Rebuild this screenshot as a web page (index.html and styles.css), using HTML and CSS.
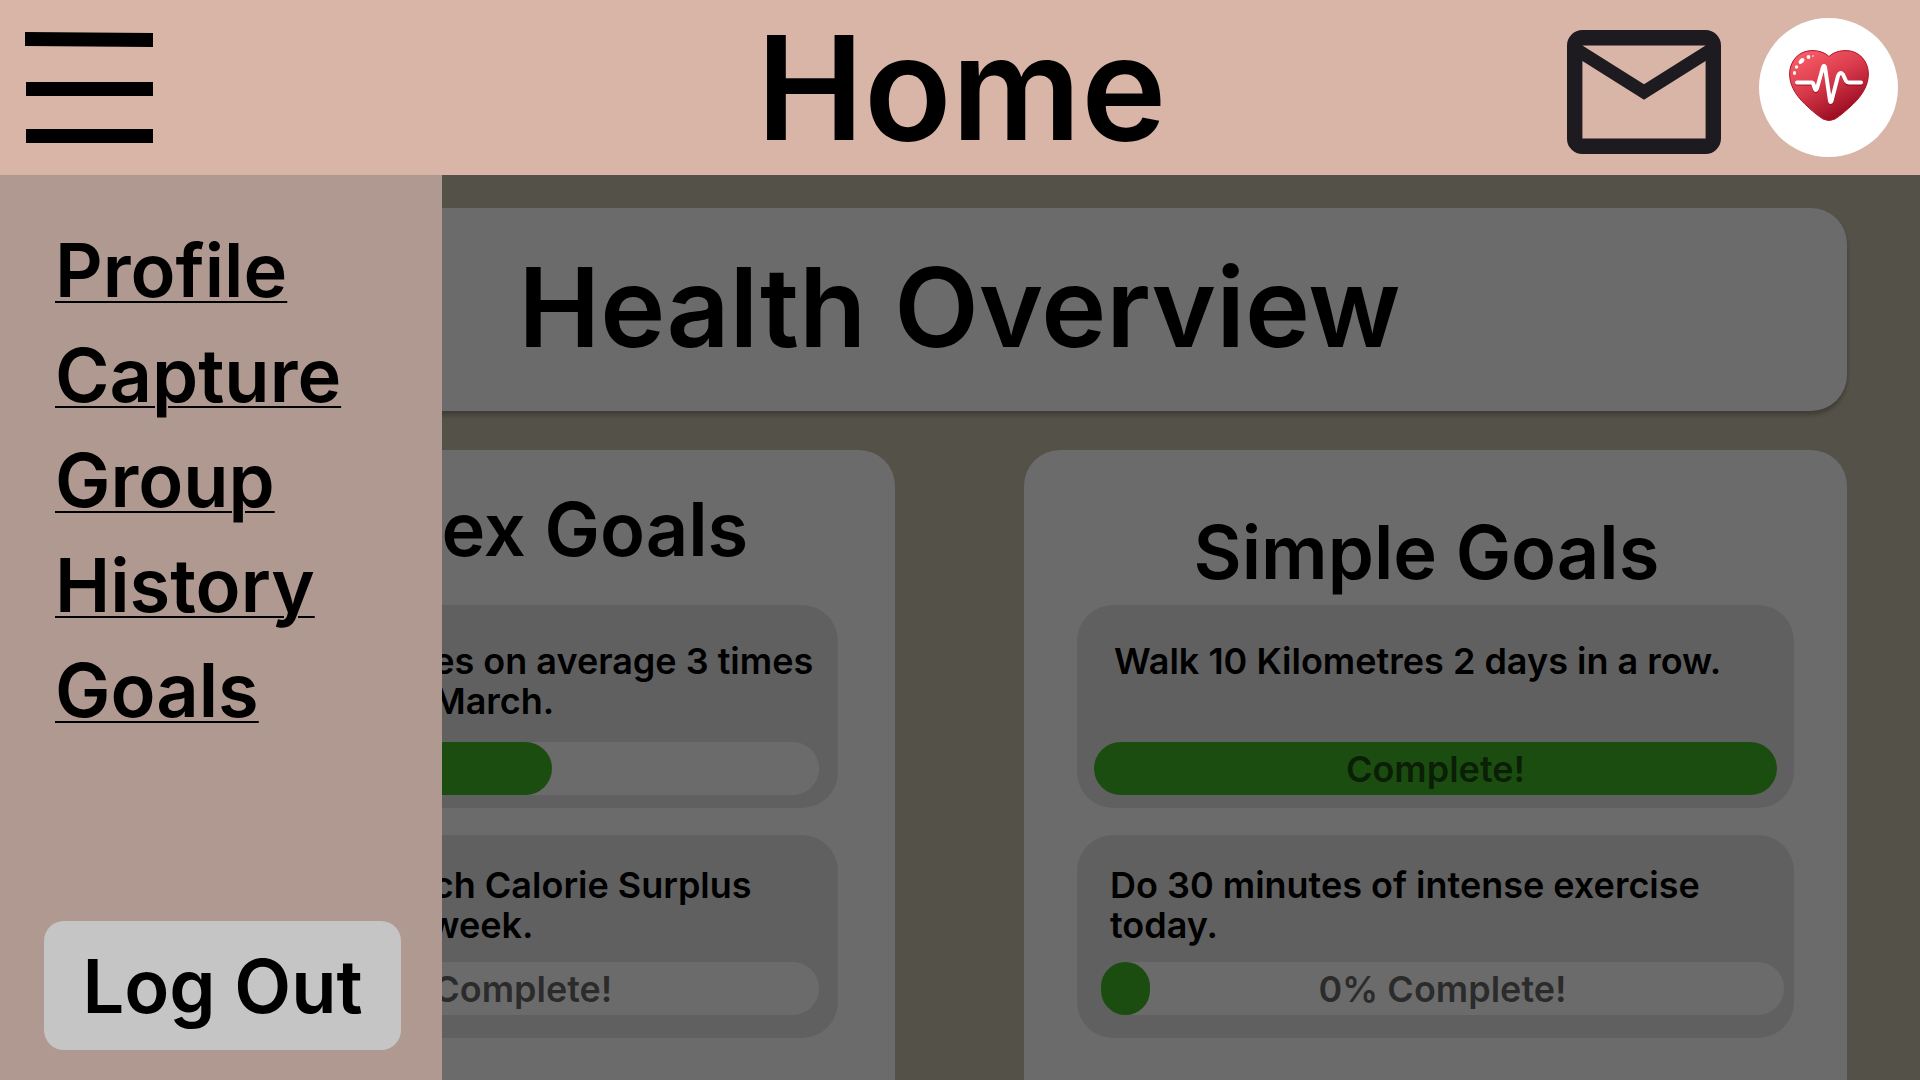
FILE: index.html
```html
<!DOCTYPE html>
<html lang="en">
<head>
<meta charset="utf-8">
<title>Home</title>
<link rel="stylesheet" href="styles.css">
</head>
<body>
<header class="topbar">
  <button class="menu-button" type="button" aria-label="Menu">
    <svg width="128" height="112" viewBox="0 0 128 112" aria-hidden="true">
      <path d="M0 0L128 1V15L0 14Z"/>
      <path d="M1 50H128V64H1Z"/>
      <path d="M1 97H128V111H1Z"/>
    </svg>
  </button>
  <h1 class="page-title">Home</h1>
  <div class="topbar-actions">
    <a class="icon-link" href="#messages" aria-label="Messages">
      <svg width="154" height="124" viewBox="0 0 20 16" preserveAspectRatio="none" aria-hidden="true">
        <path fill="#1d1b20" d="M2 16c-.55 0-1.02-.2-1.41-.59A1.93 1.93 0 0 1 0 14V2C0 1.45.2.98.59.59.98.2 1.45 0 2 0h16c.55 0 1.02.2 1.41.59.39.39.59.86.59 1.41v12c0 .55-.2 1.02-.59 1.41-.39.39-.86.59-1.41.59H2Zm8-7L2 4v10h16V4l-8 5Zm0-2 8-5H2l8 5ZM2 4V2v12V4Z"/>
      </svg>
    </a>
    <a class="avatar" href="#health" aria-label="Health">
      <svg width="80" height="71" viewBox="0 0 80 71" aria-hidden="true">
        <defs>
          <linearGradient id="heart" x1="0.15" y1="0" x2="0.75" y2="1">
            <stop offset="0" stop-color="#f9606a"/>
            <stop offset="0.45" stop-color="#d93a4b"/>
            <stop offset="1" stop-color="#8d0319"/>
          </linearGradient>
        </defs>
        <path fill="url(#heart)" stroke="#b3152b" stroke-width="1" d="M40 6.500C45 2 51 .6 57 .6C70 .6 79.400 11 79.400 24C79.400 38 70 49 61 57C55 62.500 50 66.500 46 69Q40 72 34 69C30 66.500 25 62.500 19 57C10 49 .6 38 .6 24C.6 11 10 .6 23 .6C29 .6 35 2 40 6.500Z"/>
        <g fill="#fff">
          <ellipse cx="12.500" cy="11" rx="3.400" ry="2.200" transform="rotate(-45 12.500 11)"/>
          <circle cx="19.500" cy="7" r="1.900"/>
          <circle cx="24" cy="6" r=".8"/>
          <circle cx="7.500" cy="17" r="1.700"/>
          <ellipse cx="5.500" cy="23" rx="1.600" ry="2"/>
        </g>
        <path fill="none" stroke="#6e0012" stroke-opacity=".35" stroke-width="4" stroke-linecap="round" stroke-linejoin="round" d="M8 34H22.500Q24 34 24.500 36L26 40.500Q27 42.500 28 40L34 18Q35 15.500 36 18L41 52Q41.500 54 42.500 52L49 27Q51 22 54 25.500L57 32Q58 34 60 34H72"/>
        <path fill="none" stroke="#fff" stroke-width="4" stroke-linecap="round" stroke-linejoin="round" d="M8 32.500H22.500Q24 32.500 24.500 34.500L26 39Q27 41 28 38.500L34 17Q35 14.500 36 17L41 51Q41.500 53 42.500 51L49 26Q51 21 54 24.500L57 31Q58 32.500 60 32.500H72"/>
      </svg>
    </a>
  </div>
</header>
<div class="stage">
  <main class="content">
    <section class="panel overview"><h2 class="overview-title">Health Overview</h2></section>
    <div class="columns">
      <section class="panel column column-complex">
        <h3 class="column-title">Complex Goals</h3>
        <article class="goal">
          <p class="goal-text">Run 20 Kilometres on average 3 times<br>a week through March.</p>
          <div class="bar"><div class="bar-fill" style="width:61%"></div></div>
        </article>
        <article class="goal goal-compact">
          <p class="goal-text">Make sure to reach Calorie Surplus<br>each day of this week.</p>
          <div class="bar"><span class="bar-label">50% Complete!</span></div>
        </article>
      </section>
      <section class="panel column column-simple">
        <h3 class="column-title">Simple Goals</h3>
        <article class="goal">
          <p class="goal-text">Walk 10 Kilometres 2 days in a row.</p>
          <div class="bar"><div class="bar-fill" style="width:100%"></div><span class="bar-label">Complete!</span></div>
        </article>
        <article class="goal goal-compact">
          <p class="goal-text">Do 30 minutes of intense exercise<br>today.</p>
          <div class="bar"><div class="bar-fill" style="width:0%"></div><span class="bar-label">0% Complete!</span></div>
        </article>
      </section>
    </div>
  </main>
  <div class="scrim"></div>
  <aside class="drawer">
    <nav class="drawer-nav">
      <a href="#profile">Profile</a>
      <a href="#capture">Capture</a>
      <a href="#group">Group</a>
      <a href="#history">History</a>
      <a href="#goals">Goals</a>
    </nav>
    <button class="logout" type="button">Log Out</button>
  </aside>
</div>
</body>
</html>
```
FILE: styles.css
```css
* { box-sizing: border-box; }

body {
  margin: 0;
  height: 100vh;
  display: flex;
  flex-direction: column;
  overflow: hidden;
  background: #c9c1ae;
  color: #000;
  font-family: Inter, "Open Sans", sans-serif;
  font-weight: 600;
}

h1, h2, h3, p { margin: 0; font-weight: inherit; }

button { border: 0; padding: 0; font: inherit; color: inherit; cursor: pointer; }

svg { display: block; }

/* Top bar */
.topbar {
  flex: none;
  display: grid;
  grid-template-columns: 1fr auto 1fr;
  align-items: center;
  min-height: 175px;
  padding: 0 22px 0 25px;
  background: #d9b5a7;
}
.menu-button { justify-self: start; background: none; }
.page-title { font-size: 144px; line-height: 174px; }
.topbar-actions {
  justify-self: end;
  display: flex;
  align-items: center;
  gap: 38px;
}
.icon-link { padding-top: 8px; }
.avatar {
  display: flex;
  justify-content: center;
  width: 139px;
  height: 139px;
  padding-top: 32px;
  border-radius: 50%;
  background: #fff;
}

/* Page content, dimmed while the drawer is open */
.stage { position: relative; flex: 1; min-height: 0; overflow: hidden; }
.content {
  display: flex;
  flex-direction: column;
  gap: 39px;
  height: 100%;
  padding: 33px 73px 0 72px;
}
.scrim { position: absolute; inset: 0; background: rgba(0, 0, 0, 0.58); }
.panel { background: #fff; border-radius: 36px; }
.overview {
  flex: none;
  padding: 38px 40px 42px;
  text-align: center;
  box-shadow: 0 4px 4px rgba(0, 0, 0, 0.25);
}
.overview-title { font-size: 110px; line-height: 123px; }

.columns {
  flex: 1;
  display: grid;
  grid-template-columns: 1fr 1fr;
  gap: 129px;
}
.column {
  display: flex;
  flex-direction: column;
  gap: 27px;
  border-radius: 36px 36px 0 0;
}
.column-complex { padding: 38px 57px 0 48px; }
.column-simple { padding: 61px 53px 0; }
.column-title { font-size: 74px; line-height: 82px; text-align: center; }
.column-complex .column-title { margin-bottom: 8px; }
.column-simple .column-title { margin-bottom: -15px; padding-right: 18px; }

.goal {
  display: flex;
  flex-direction: column;
  justify-content: space-between;
  min-height: 203px;
  padding: 36px 17px 13px;
  border-radius: 36px;
  background: #e5e5e5;
}
.goal-compact { padding: 30px 10px 23px 24px; }
.column-complex .goal { padding-left: 15px; padding-right: 19px; }
.goal-text { padding-left: 20px; font-size: 36px; line-height: 40px; }
.goal-compact .goal-text { padding-left: 9px; }
.bar {
  position: relative;
  height: 53px;
  border-radius: 27px;
  background: #fff;
  text-align: center;
}
.bar-fill { height: 100%; min-width: 49px; border-radius: 27px; background: #40b726; }
.bar-label {
  position: absolute;
  inset: 0;
  font-size: 36px;
  line-height: 55px;
  color: rgba(0, 0, 0, 0.6);
}

/* Drawer */
.drawer {
  position: absolute;
  inset: 0 auto 0 0;
  display: flex;
  flex-direction: column;
  justify-content: space-between;
  width: 442px;
  padding: 43px 41px 30px 44px;
  background: #b09990;
}
.drawer-nav {
  display: flex;
  flex-direction: column;
  align-items: flex-start;
  padding-left: 11px;
  font-size: 74px;
  line-height: 105px;
}
.drawer-nav a {
  color: inherit;
  text-decoration-thickness: 2px;
  text-underline-offset: 4px;
}
.logout {
  height: 129px;
  border-radius: 20px;
  background: #c5c5c5;
  font-size: 74px;
}
```
